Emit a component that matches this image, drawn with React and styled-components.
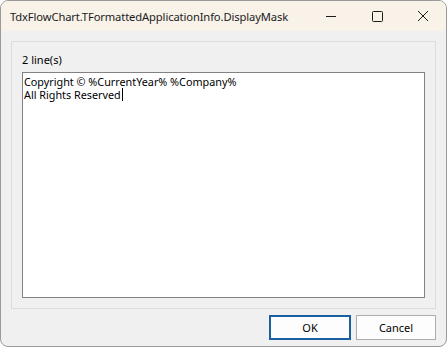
import React from "react";
import styled, { createGlobalStyle } from "styled-components";

const Global = createGlobalStyle`
  html, body { margin: 0; padding: 0; background: #ffffff; }
  * { box-sizing: border-box; }
`;

const Window = styled.div`
  width: 447px;
  height: 347px;
  border: 1px solid #9a9a9a;
  border-radius: 8px;
  overflow: hidden;
  background: #f0f0f0;
  display: flex;
  flex-direction: column;
  font-family: "Noto Sans", "Open Sans", sans-serif;
  color: #000;
`;

const TitleBar = styled.div`
  height: 30px;
  background: #f8f2e9;
  display: flex;
  align-items: center;
  padding-left: 9px;
`;

const Title = styled.div`
  flex: 1;
  font-size: 11.2px;
  color: #1b1b1b;
  white-space: nowrap;
  letter-spacing: -0.12px;
`;

const CaptionButton = styled.div`
  width: 46px;
  height: 30px;
  display: flex;
  align-items: center;
  justify-content: center;
`;

const Body = styled.div`
  flex: 1;
  display: flex;
  flex-direction: column;
  padding: 10px 10px 0 10px;
`;

const Panel = styled.div`
  height: 268px;
  border: 1px solid #dcdcdc;
  padding: 10px 10px 10px 10px;
  display: flex;
  flex-direction: column;
`;

const Label = styled.div`
  font-size: 11px;
  height: 20px;
  line-height: 13px;
  padding-top: 1px;
`;

const Memo = styled.div`
  flex: 1;
  background: #ffffff;
  border: 1px solid #828282;
  padding: 2px 1px;
  font-size: 10.8px;
  line-height: 13px;
`;

const Line = styled.div`
  white-space: pre;
  height: 13px;
`;

const Caret = styled.span`
  display: inline-block;
  width: 1px;
  height: 13px;
  background: #000;
  vertical-align: top;
  margin-left: 1px;
`;

const Footer = styled.div`
  display: flex;
  justify-content: flex-end;
  gap: 5px;
  padding-top: 6px;
`;

const Button = styled.button`
  width: ${(p) => (p.$default ? 82 : 80)}px;
  height: 25px;
  background: #fdfdfd;
  border: ${(p) => (p.$default ? "2px solid #1a5fa0" : "1px solid #adadad")};
  font-family: "Noto Sans", "Open Sans", sans-serif;
  font-size: 11px;
  color: #000;
  padding: 0;
  margin: 0;
`;

export default function App() {
  return (
    <>
      <Global />
      <Window>
        <TitleBar>
          <Title>TdxFlowChart.TFormattedApplicationInfo.DisplayMask</Title>
          <CaptionButton>
            <svg width="12" height="12" viewBox="0 0 12 12">
              <line x1="1" y1="6.5" x2="11" y2="6.5" stroke="#1b1b1b" strokeWidth="1" />
            </svg>
          </CaptionButton>
          <CaptionButton>
            <svg width="12" height="12" viewBox="0 0 12 12">
              <rect x="1.5" y="1.5" width="10" height="10" rx="1" fill="none" stroke="#1b1b1b" strokeWidth="1" />
            </svg>
          </CaptionButton>
          <CaptionButton>
            <svg width="12" height="12" viewBox="0 0 12 12">
              <path d="M1 1 L11 11 M11 1 L1 11" stroke="#1b1b1b" strokeWidth="1" />
            </svg>
          </CaptionButton>
        </TitleBar>
        <Body>
          <Panel>
            <Label>2 line(s)</Label>
            <Memo>
              <Line>Copyright © %CurrentYear% %Company%</Line>
              <Line>All Rights Reserved<Caret /></Line>
            </Memo>
          </Panel>
          <Footer>
            <Button $default>OK</Button>
            <Button>Cancel</Button>
          </Footer>
        </Body>
      </Window>
    </>
  );
}
